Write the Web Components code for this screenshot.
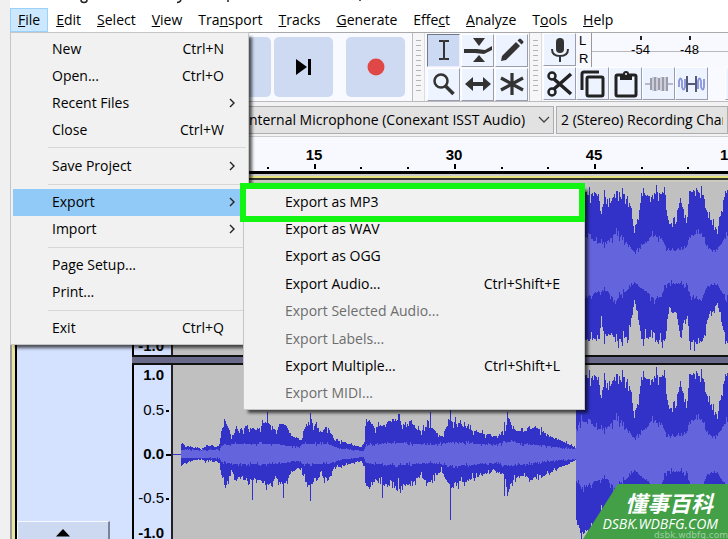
<!DOCTYPE html>
<html lang="en">
<head>
<meta charset="utf-8">
<title>Audio editor</title>
<style>
html,body{margin:0;height:100%}
body{background:#f0f0f0;font:14px/20px "Open Sans","Noto Sans",sans-serif;color:#000;overflow:hidden}
</style>
</head>
<body>
<audio-editor></audio-editor>
<script>
const define = (name, html, setup) => customElements.define(name, class extends HTMLElement {
  constructor() {
    super();
    const t = document.createElement('template');
    t.innerHTML = html;
    this.attachShadow({mode: 'open'}).appendChild(t.content.cloneNode(true));
  }
  connectedCallback() { if (setup && !this.ready) { this.ready = true; setup(this, this.shadowRoot); } }
});

define('menu-title', `<style>
:host{display:block}
button{font:inherit;color:inherit;border:1px solid transparent;background:none;margin:0;padding:0 7px;height:24px;line-height:22px;white-space:nowrap}
:host([open]) button{background:#cce8ff;border-color:#99d1ff}
</style><button type="button"><slot></slot></button>`);

define('menu-bar', `<style>
:host{display:flex;height:24px;background:#fff;font-size:14px}
</style><slot></slot>`);

define('menu-row', `<style>
:host{display:block;min-height:0}
button{box-sizing:border-box;width:100%;height:100%;display:flex;align-items:center;font:inherit;color:inherit;text-align:left;border:0;background:none;margin:0;padding:0 22px 0 39px;white-space:nowrap}
:host([active]) button{background:#91c9f7}
:host([disabled]) button{color:#6d6d6d}
.label{flex:1}
svg{display:none;width:8px;height:12px;margin-right:-12px}
:host([more]) svg{display:block}
</style><button type="button"><span class="label"><slot></slot></span><span class="key"></span><svg viewBox="0 0 8 12"><path d="M2 2l4 4-4 4" fill="none" stroke="#222" stroke-width="1.4"/></svg></button>`,
(el, root) => {
  root.querySelector('.key').textContent = el.getAttribute('key') || '';
  if (el.hasAttribute('disabled')) root.querySelector('button').disabled = true;
});

define('menu-line', `<style>:host{display:block;height:9px;box-sizing:border-box;padding:4px 0 0 35px}i{display:block;height:1px;background:#d7d7d7}</style><i></i>`);

define('menu-panel', `<style>
:host{display:grid;box-sizing:border-box;background:#f1f1f1;border:1px solid #c6c6c6;padding:2px;box-shadow:4px 4px 3px -1px rgba(0,0,0,.65)}
</style><slot></slot>`);

define('tool-button', `<style>
:host{display:block;width:33px;height:33px}
button{box-sizing:border-box;width:100%;height:100%;display:flex;align-items:center;justify-content:center;margin:0;padding:0;border:1px solid #fff;border-right-color:#9a9eac;border-bottom-color:#9a9eac;background:#edf3ff}
:host([on]) button{background:#ccd9f2;border-color:#707888 #eef #eef #707888}
:host([flat]) {width:59px;height:60px}
:host([flat]) button{background:#cedaf1;border:0;border-radius:5px}
</style><button type="button"><slot></slot></button>`,
(el, root) => root.querySelector('button').setAttribute('aria-label', el.getAttribute('label')));

define('grab-handle', `<style>
:host{display:flex;align-items:center;justify-content:center;box-sizing:border-box;width:13px;border-left:1px solid #bbb;border-right:1px solid #ddd;background:#f6f6f8}
i{width:5px;height:80%;background:repeating-linear-gradient(#b4b4b8 0 1px,transparent 1px 5px)}
</style><i></i>`);

define('level-meter', `<style>
:host{display:flex;flex:1;min-width:0;height:34px;background:#f8f9fe;font:13px/16px "Liberation Sans",sans-serif;overflow:hidden}
.side{width:15px;padding-left:3px;flex:none;box-sizing:border-box;display:flex;flex-direction:column;justify-content:space-between}
.scale{flex:1;min-width:0;display:flex;border-left:1px solid #999;padding-left:24px;background:linear-gradient(#b8b8c0,#b8b8c0) 0 18px/100% 1px no-repeat}
.mark{flex:none;width:49px;display:flex;flex-direction:column;align-items:center}
.mark i{width:2px;height:4px;background:#222;margin:3px 0 2px}
</style><div class="side"><span>L</span><span>R</span></div><div class="scale"><span class="mark"><i></i>-54</span><span class="mark"><i></i>-48</span></div>`);

define('device-select', `<style>
:host{display:flex;position:relative;min-width:0}
select{appearance:none;box-sizing:border-box;width:100%;height:28px;border:1px solid #adadad;border-radius:0;background:#e2e2e2;font:inherit;color:#000;padding:0 4px;margin:0}
svg{position:absolute;right:4px;top:9px;width:12px;height:10px}
:host([bare]) svg{display:none}
</style><select></select><svg viewBox="0 0 12 10"><path d="M1 2l5 5 5-5" fill="none" stroke="#444" stroke-width="1.3"/></svg>`,
(el, root) => {
  const s = root.querySelector('select');
  s.setAttribute('aria-label', el.getAttribute('label'));
  s.add(new Option(el.getAttribute('value')));
  if (el.hasAttribute('inset')) s.style.paddingLeft = el.getAttribute('inset') + 'px';
});

define('time-ruler', `<style>
:host{display:block;height:34px;background:#f8f9fe;border-top:1px solid #ccc;font:bold 15px/18px "Liberation Sans",sans-serif;overflow:hidden}
svg{display:block;width:100%;height:34px}
</style><svg></svg>`,
(el, root) => {
  const labels = {304: '15', 444: '30', 584: '45', 725: '1:00'};
  let s = '';
  for (let k = 0, x = 257; x < 2000; k++, x = Math.round(257 + k * 46.7)) {
    const major = k % 3 === 1;
    s += `<rect x="${x}" y="${major ? 27 : 30}" width="2" height="${major ? 5 : 2}"/>`;
  }
  for (const x in labels) s += `<text x="${x}" y="23" text-anchor="middle">${labels[x]}</text>`;
  root.querySelector('svg').innerHTML = s;
});

/* Peak and RMS envelopes: [x, height] pairs, in pixels from the start of the channel. */
const quiet = [[8,12],[11,9],[18,7],[28,5],[33,8],[43,7],[46,10],[48,22],[52,33],[55,26],[58,16],[63,27],[66,20],[73,28],[78,25],[86,25],[90,31],[98,30],[103,21],[106,29],[112,29],[118,19],[124,14],[128,14],[130,23],[134,32],[142,29],[148,21],[153,28],[158,21],[161,13],[170,12],[180,9],[188,7],[191,12],[192,29],[196,34],[202,26],[208,29],[218,33],[225,36],[230,30],[238,32],[243,25],[248,23],[254,29],[261,23],[268,17],[273,26],[277,34],[283,31],[290,28],[300,24],[312,20],[322,18],[331,20],[334,39],[338,29],[343,23],[353,22],[361,27],[373,20],[383,15],[393,11],[402,6]];
const loud = [[403,60],[405,80],[414,77],[425,76],[428,56],[431,74],[438,70],[443,79],[448,77],[454,73],[458,60],[461,35],[466,60],[468,76],[476,74],[483,79],[491,77],[495,45],[503,49],[507,72],[511,56],[514,52],[516,79],[523,81],[530,76],[534,56],[538,50],[544,38],[548,58],[552,79],[564,80],[580,72],[620,76],[2000,70]];
const rmsQ = [[8,4],[46,4],[48,8],[60,10],[100,10],[125,7],[130,10],[155,10],[165,6],[190,3],[193,9],[220,11],[260,9],[280,12],[320,9],[335,12],[360,9],[390,6],[402,5]];
const rmsL = [[403,26],[408,34],[414,31],[428,25],[434,26],[443,35],[448,29],[454,25],[461,16],[468,23],[474,27],[480,34],[488,30],[494,17],[510,18],[514,22],[518,33],[528,35],[534,20],[544,18],[550,28],[556,35],[600,28],[2000,26]];
const spikes = {94:[42,30],137:[41,47],79:[26,46],110:[30,44],209:[28,44],257:[42,28],277:[44,66],334:[42,42],331:[32,42],225:[40,24]};
const at = (env, x) => {
  for (let i = 1; i < env.length; i++) if (x <= env[i][0]) {
    const [a, p] = env[i - 1], [b, q] = env[i];
    return p + (q - p) * (x - a) / (b - a);
  }
  return 0;
};
define('wave-channel', `<style>
:host{display:flex;min-height:0;overflow:hidden}
.scale{width:37px;flex:none;border-left:2px solid #000;border-right:2px solid #222;background:#d4e1ff;overflow:hidden}
.scale svg{display:block;width:37px;height:100%;font:15px/18px "Liberation Sans",sans-serif}
.wave{flex:1;min-width:0;background:#c0c0c0;overflow:hidden}
.wave svg{display:block;width:100%;height:100%}
</style><div class="scale"><svg></svg></div><div class="wave"><svg shape-rendering="crispEdges"></svg></div>`,
(el, root) => {
  const mid = +el.getAttribute('mid'), gain = +el.getAttribute('gain'), unit = +el.getAttribute('unit');
  let seed = 7, s = '';
  const rnd = () => (seed = (seed * 16807) % 2147483647) / 2147483647;
  for (const [t, y, b] of [['1.0', -unit + 9, 1], ['0.5', -unit / 2, 0], ['0.0', 0, 1], ['-0.5', unit / 2, 0], ['-1.0', unit - 9, 1]]) {
    s += `<text x="30" y="${Math.round(mid + y + 5)}" text-anchor="end" font-weight="${b ? 700 : 400}">${t}</text>`;
    if (Math.abs(y) < unit - 10) s += `<rect x="32" y="${Math.round(mid + y)}" width="${y ? 3 : 5}" height="2"/>`;
  }
  root.querySelector('.scale svg').innerHTML = s;
  let peak = '', rms = '';
  for (let x = 8; x < 1600; x++) {
    const big = x >= 403, p = at(big ? loud : quiet, x), r = at(big ? rmsL : rmsQ, x);
    const n = () => { const v = rnd(); return v < .2 ? -.22 * rnd() : v > .88 ? .16 : (v - .5) * .14; };
    const k = big ? .6 : 1;
    let up = p * (1 + k * n()), dn = p * (1 + k * n());
    if (spikes[x]) [up, dn] = spikes[x];
    up = Math.round(up * gain); dn = Math.round(dn * gain);
    const m = Math.round(r * gain * (1 + n())), m2 = Math.round(r * gain * (1 + n()));
    peak += `M${x} ${mid - up}h1v${up + dn}h-1z`;
    rms += `M${x} ${mid - m}h1v${m + m2}h-1z`;
  }
  root.querySelector('.wave svg').innerHTML = `<path d="M0 ${mid}h8v1h-8z" fill="#3232c8"/><path d="${peak}" fill="#3232c8"/><path d="${rms}" fill="#6464dc"/>`;
});

define('track-view', `<style>
:host{display:flex;flex:1;min-height:0;border-top:2px solid #333}
.edge{width:7px;flex:none;box-sizing:border-box;border-left:2px solid #999;border-right:2px solid #000;background:#e8e6a0}
.panel{width:115px;flex:none;display:flex;flex-direction:column;justify-content:flex-end;align-items:flex-start;background:#d4e1ff}
button{box-sizing:border-box;width:93px;height:18px;margin:0;padding:7px 0 0;border:1px solid #f4f8ff;border-right:2px solid #7a8496;border-bottom:0;background:#ccd9f0;display:flex;justify-content:center}
button svg{width:14px;height:8px}
.channels{flex:1;min-width:0;display:flex;flex-direction:column}
.gap{height:6px;flex:none;background:#696989;border:solid #111;border-width:2px 0}
.top{height:2px;flex:none;background:#c9ccbd}
#a{flex:0 0 173px}#b{flex:1}
</style><div class="edge"></div><div class="panel"><button type="button" aria-label="Collapse track"><svg viewBox="0 0 14 8"><path d="M0 7.500 7 0l7 7.500z"/></svg></button></div>
<div class="channels"><div class="top"></div><wave-channel id="a" mid="85" gain="0.95" unit="88"></wave-channel><div class="gap"></div><wave-channel id="b" mid="89" gain="1" unit="88"></wave-channel></div>`);

define('corner-badge', `<style>
:host{display:block;box-sizing:border-box;width:145px;height:55px;padding:4px 10px 0 0;background:#43a047;clip-path:polygon(24% 0,100% 0,100% 100%,0 100%);color:#fff;text-align:right;overflow:hidden}
b,span{display:block;white-space:nowrap}
b{font:italic bold 22px/28px "Noto Sans CJK SC",sans-serif;padding-right:5px}
span{font:italic 500 14px/16px "Open Sans",sans-serif}
small{position:absolute;right:0;top:46px;font:9px/10px "DejaVu Sans",sans-serif;color:#9fcfa2;width:57px;height:9px;text-align:right;direction:rtl;white-space:nowrap}
</style><b lang="zh">懂事百科</b><span>DSBK.WDBFG.COM</span><small><bdi>dsbk.wdbfg.com</bdi></small>`);

define('audio-editor', `<style>
:host{display:flex;flex-direction:column;box-sizing:border-box;min-height:100vh;height:100vh;padding-left:10px;position:relative;overflow:hidden}
.title{height:8px;flex:none;background:#fff}
.title svg{display:block;width:400px;height:8px}
menu-bar{flex:none}
.tools{display:flex;flex:none;height:70px;box-sizing:border-box;border-top:1px solid #aaa;border-bottom:1px solid #bbb;background:#f8faff}
.transport{width:402px;flex:none;box-sizing:border-box;display:flex;align-items:center;justify-content:flex-end;padding-right:7px;gap:3px}
.transport tool-button:last-child{margin-left:10px}
.grid{display:grid;grid-template-columns:repeat(3,33px);gap:1px;padding:0 1px 0 2px;align-content:center}
.right{flex:1;min-width:0;display:flex;flex-direction:column;justify-content:space-between}
.line{display:flex;min-width:0;height:34px;overflow:hidden;padding-left:1px}
.line tool-button{flex:none}
.line .next{margin-left:17px}
.devices{display:flex;flex:none;gap:2px;padding:4px 0 2px;background:#f2f2f4}
.devices device-select:first-child{flex:0 0 544px}.devices device-select:last-child{flex:1}
.band{flex:none;height:7px;background:linear-gradient(#000 0 3px,#ccc 3px 5px,#e5e47c 5px)}
.file{position:absolute;left:10px;top:32px;width:239px;height:313px;grid-template-rows:repeat(4,1fr) 9px 1fr 9px repeat(2,1fr) 9px repeat(2,1fr) 9px 1fr}
.export{position:absolute;left:243px;top:185px;width:342px;height:225px;grid-auto-rows:1fr}
.mark{position:absolute;left:240px;top:183px;width:333px;height:27px;border:6px solid #11f511}
corner-badge{position:absolute;right:0;bottom:0}
svg{display:block}
</style>
<div class="title"><svg viewBox="0 0 400 8"><path d="M71 0q0 2.500 3 2.500t3-2.500M167 2.500q3 0 4-2.500M218 0v2M350 0v1" fill="none" stroke="#222" stroke-width="1.500"/></svg></div>
<menu-bar>
<menu-title open><u>F</u>ile</menu-title><menu-title><u>E</u>dit</menu-title><menu-title><u>S</u>elect</menu-title><menu-title><u>V</u>iew</menu-title><menu-title>Tra<u>n</u>sport</menu-title><menu-title><u>T</u>racks</menu-title><menu-title><u>G</u>enerate</menu-title><menu-title>Effe<u>c</u>t</menu-title><menu-title><u>A</u>nalyze</menu-title><menu-title>T<u>o</u>ols</menu-title><menu-title><u>H</u>elp</menu-title>
</menu-bar>
<div class="tools">
 <div class="transport">
  <tool-button flat label="Skip to start"><svg width="16" height="16"><path d="M1 0h3v16H1zM15 0v16L4 8z"/></svg></tool-button>
  <tool-button flat label="Skip to end"><svg width="16" height="16"><path d="M0 0l11 8-11 8zM12 0h3v16h-3z"/></svg></tool-button>
  <tool-button flat label="Record"><svg width="18" height="18"><circle cx="9" cy="9" r="8.500" fill="#e04848"/></svg></tool-button>
 </div>
 <grab-handle></grab-handle>
 <div class="grid">
  <tool-button on label="Selection"><svg width="22" height="24"><path d="M6 3h4q1 0 1 1 0-1 1-1h4M11 4v16M6 21h4q1 0 1-1 0 1 1 1h4" fill="none" stroke="#333" stroke-width="2"/></svg></tool-button>
  <tool-button label="Envelope"><svg width="30" height="28"><path d="M10 2h12l-6 8zM10 26h12l-6-7z" fill="#333"/><path d="M1 13h13l8 1 7-4v4l-8 4-9-1H1z" fill="#333"/></svg></tool-button>
  <tool-button label="Draw"><svg width="26" height="26"><path d="M3 19L17 5l4 4L7 23l-5 1zM18.500 3.500l1.500-1.500q1-1 2 0l2 2q1 1 0 2l-1.500 1.500z" fill="#333"/></svg></tool-button>
  <tool-button label="Zoom"><svg width="26" height="26"><circle cx="10" cy="10" r="6.500" fill="none" stroke="#333" stroke-width="2.500"/><path d="M14.500 15l8 8" stroke="#333" stroke-width="3.500"/></svg></tool-button>
  <tool-button label="Time shift"><svg width="28" height="20"><path d="M1 10l8-7v5h10V3l8 7-8 7v-5H9v5z" fill="#333"/></svg></tool-button>
  <tool-button label="Multi-tool"><svg width="26" height="26"><path d="M13 2v22M2 7l22 12M24 7L2 19" stroke="#333" stroke-width="3.200"/></svg></tool-button>
 </div>
 <grab-handle></grab-handle>
 <div class="right">
  <div class="line"><tool-button label="Record level"><svg width="20" height="26"><rect x="6" y="1" width="8" height="15" rx="4" fill="#333"/><path d="M2 12q0 7 8 7t8-7M10 19v6" fill="none" stroke="#333" stroke-width="2"/></svg></tool-button><level-meter></level-meter></div>
  <div class="line">
   <tool-button label="Cut"><svg width="28" height="26" fill="none" stroke="#222"><circle cx="6" cy="5" r="3.500" stroke-width="2.500"/><circle cx="6" cy="21" r="3.500" stroke-width="2.500"/><path d="M8 8l17 15M8 18L25 3" stroke-width="3.500"/></svg></tool-button>
   <tool-button label="Copy"><svg width="28" height="28" fill="none" stroke="#222" stroke-width="3"><rect x="8" y="7" width="16" height="19" rx="1.500"/><path d="M3 20V4q0-2 2-2h15"/></svg></tool-button>
   <tool-button label="Paste"><svg width="26" height="28"><rect x="3" y="5" width="20" height="21" rx="1.500" fill="none" stroke="#222" stroke-width="3"/><path d="M7 4h3q0-3 3-3t3 3h3v6H7z" fill="#222"/><circle cx="13" cy="4" r="1" fill="#fff"/></svg></tool-button>
   <tool-button label="Trim"><svg width="28" height="20" fill="none"><path d="M0 10h6M22 10h6" stroke="#b7b9d0" stroke-width="2"/><path d="M6 4v12M10 3v14M14 4v12M18 3v14M22 3v14" stroke="#9a9cab" stroke-width="2"/><path d="M8 3v14M12 3v14M16 3v14M20 3v14" stroke="#cdced8" stroke-width="2"/></svg></tool-button>
   <tool-button label="Silence"><svg width="28" height="20" fill="none"><path d="M1 13V7q1.500-5 3 0v6q1.500 5 3 0V5M20 15V7q1.500-5 3 0v6q2 5 3 0V5" stroke="#8794dc" stroke-width="1.800"/><path d="M9 2v16M18 2v16M9 10h9" stroke="#555a78" stroke-width="2"/></svg></tool-button>
   <tool-button class="next" label="Undo"></tool-button>
  </div>
 </div>
</div>
<div class="devices"><device-select label="Recording device" inset="234" value="Internal Microphone (Conexant ISST Audio)"></device-select><device-select bare label="Channels" value="2 (Stereo) Recording Channels"></device-select></div>
<time-ruler></time-ruler>
<div class="band"></div>
<track-view></track-view>
<menu-panel class="file">
<menu-row key="Ctrl+N">New</menu-row><menu-row key="Ctrl+O">Open...</menu-row><menu-row more>Recent Files</menu-row><menu-row key="Ctrl+W">Close</menu-row><menu-line></menu-line><menu-row more>Save Project</menu-row><menu-line></menu-line><menu-row more active>Export</menu-row><menu-row more>Import</menu-row><menu-line></menu-line><menu-row>Page Setup...</menu-row><menu-row>Print...</menu-row><menu-line></menu-line><menu-row key="Ctrl+Q">Exit</menu-row>
</menu-panel>
<menu-panel class="export">
<menu-row>Export as MP3</menu-row><menu-row>Export as WAV</menu-row><menu-row>Export as OGG</menu-row><menu-row key="Ctrl+Shift+E">Export Audio...</menu-row><menu-row disabled>Export Selected Audio...</menu-row><menu-row disabled>Export Labels...</menu-row><menu-row key="Ctrl+Shift+L">Export Multiple...</menu-row><menu-row disabled>Export MIDI...</menu-row>
</menu-panel>
<div class="mark"></div>
<corner-badge></corner-badge>`);
</script>
</body>
</html>
